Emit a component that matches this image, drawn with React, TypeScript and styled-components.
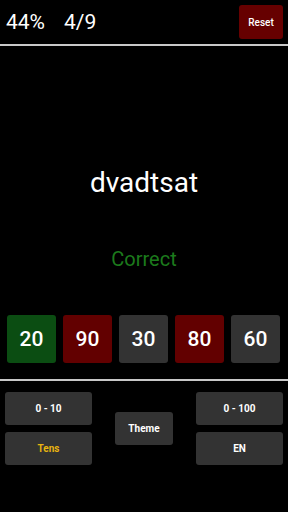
import React from 'react';
import styled, { createGlobalStyle } from 'styled-components';

const GlobalStyle = createGlobalStyle`
  html, body {
    margin: 0;
    padding: 0;
    background: #000;
    font-family: Roboto, "Liberation Sans", sans-serif;
    color: #fff;
  }
`;

const Screen = styled.div`
  width: 288px;
  height: 512px;
  background: #000;
  display: flex;
  flex-direction: column;
  overflow: hidden;
`;

const Header = styled.div`
  height: 44px;
  display: flex;
  align-items: center;
  padding: 0 5px 0 6px;
  box-sizing: border-box;
`;

const Stat = styled.span`
  font-size: 21px;
  line-height: 21px;
  margin-right: 19px;
  padding-top: 1px;
`;

const ResetButton = styled.button`
  margin-left: auto;
  width: 44px;
  height: 34px;
  border: none;
  border-radius: 3px;
  background: #660000;
  color: #fff;
  font-family: Roboto, "Liberation Sans", sans-serif;
  font-size: 10px;
  font-weight: 500;
  padding: 0;
`;

const Divider = styled.div`
  height: 2px;
  background: #c8c8c8;
`;

const Main = styled.div`
  height: 333px;
  display: flex;
  flex-direction: column;
  align-items: center;
`;

const Word = styled.div`
  margin-top: 123px;
  font-size: 28px;
  line-height: 28px;
`;

const Result = styled.div`
  margin-top: 52px;
  font-size: 20px;
  line-height: 20px;
  color: #1c7a1c;
`;

const Choices = styled.div`
  margin-top: 46px;
  display: flex;
  gap: 7px;
  width: 100%;
  padding: 0 8px 0 7px;
  box-sizing: border-box;
`;

type Tone = 'right' | 'wrong' | 'plain';

const toneColor: Record<Tone, string> = {
  right: '#0b4d12',
  wrong: '#620000',
  plain: '#333333',
};

const Choice = styled.div<{ $tone: Tone }>`
  flex: 1;
  height: 48px;
  border-radius: 3px;
  background: ${(p) => toneColor[p.$tone]};
  display: flex;
  align-items: center;
  justify-content: center;
  font-size: 21px;
  font-weight: 500;
`;

const Panel = styled.div`
  flex: 1;
  display: grid;
  grid-template-columns: 87px 1fr 87px;
  align-items: center;
  padding: 11px 5px 0;
  align-content: start;
`;

const Column = styled.div`
  display: flex;
  flex-direction: column;
  gap: 7px;
`;

const Center = styled.div`
  display: flex;
  justify-content: center;
`;

const OptionButton = styled.button<{ $w?: number; $accent?: boolean }>`
  width: ${(p) => p.$w ?? 87}px;
  height: 33px;
  border: none;
  border-radius: 3px;
  background: #333333;
  color: ${(p) => (p.$accent ? '#e8b410' : '#fff')};
  font-family: Roboto, "Liberation Sans", sans-serif;
  font-size: 10px;
  font-weight: 700;
  padding: 0;
`;

const choices: { n: number; tone: Tone }[] = [
  { n: 20, tone: 'right' },
  { n: 90, tone: 'wrong' },
  { n: 30, tone: 'plain' },
  { n: 80, tone: 'wrong' },
  { n: 60, tone: 'plain' },
];

export default function App() {
  return (
    <>
      <GlobalStyle />
      <Screen>
        <Header>
          <Stat>44%</Stat>
          <Stat>4/9</Stat>
          <ResetButton>Reset</ResetButton>
        </Header>
        <Divider />
        <Main>
          <Word>dvadtsat</Word>
          <Result>Correct</Result>
          <Choices>
            {choices.map((c) => (
              <Choice key={c.n} $tone={c.tone}>
                {c.n}
              </Choice>
            ))}
          </Choices>
        </Main>
        <Divider />
        <Panel>
          <Column>
            <OptionButton>0 - 10</OptionButton>
            <OptionButton $accent>Tens</OptionButton>
          </Column>
          <Center>
            <OptionButton $w={58}>Theme</OptionButton>
          </Center>
          <Column>
            <OptionButton>0 - 100</OptionButton>
            <OptionButton>EN</OptionButton>
          </Column>
        </Panel>
      </Screen>
    </>
  );
}
